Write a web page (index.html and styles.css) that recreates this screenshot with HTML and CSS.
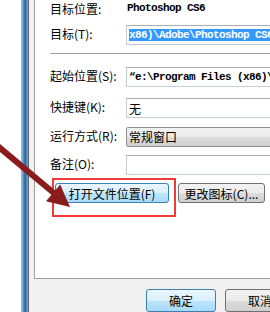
FILE: index.html
```html
<!DOCTYPE html>
<html lang="zh">
<head>
    <meta charset="UTF-8">
    <meta name="viewport" content="width=device-width, initial-scale=1.0">
    <title>Photoshop CS6 属性</title>
    <link rel="stylesheet" href="styles.css">
</head>
<body>

<div class="screen">
    <div class="outside"></div>
    <div class="frame"></div>
    <div class="dialog">
        <div class="panel">
            <div class="row info">
                <span class="label">目标位置:</span>
                <span class="mono">Photoshop CS6</span>
            </div>
            <div class="row target">
                <span class="label">目标(T):</span>
                <div class="field"><span class="mono selected">x86)\Adobe\Photoshop CS6</span></div>
            </div>
            <div class="sep"></div>
            <div class="row start">
                <span class="label">起始位置(S):</span>
                <div class="field"><span class="mono">“e:\Program Files (x86)\Adobe</span></div>
            </div>
            <div class="row hotkey">
                <span class="label">快捷键(K):</span>
                <div class="field">无</div>
            </div>
            <div class="row run">
                <span class="label">运行方式(R):</span>
                <div class="select">常规窗口</div>
            </div>
            <div class="row note">
                <span class="label">备注(O):</span>
                <div class="field"></div>
            </div>
            <div class="actions">
                <button class="btn hot wide">打开文件位置(F)</button>
                <button class="btn">更改图标(C)...</button>
            </div>
        </div>
        <div class="footer">
            <button class="btn hot ok">确定</button>
            <button class="btn ok">取消</button>
        </div>
    </div>

    <div class="mark"></div>
    <svg class="arrow" width="270" height="312" viewBox="0 0 270 312">
        <line x1="-10" y1="139.6" x2="55" y2="194" stroke="#8a1c1c" stroke-width="6"/>
        <polygon points="70,207 46,201.3 60.2,184.5" fill="#8a1c1c"/>
    </svg>
</div>

</body>
</html>
```

FILE: styles.css
```css
body {
    margin: 0;
    font-family: "Noto Sans CJK SC", sans-serif;
    font-size: 12px;
    color: #000;
    background: #fff;
    overflow: hidden;
}
.screen {
    position: relative;
    display: flex;
    width: 270px;
    height: 312px;
    overflow: hidden;
}
.outside {
    width: 21px;
    flex-shrink: 0;
    background: #fff;
}
.frame {
    width: 7px;
    flex-shrink: 0;
    background: linear-gradient(to right, #9ccaec, #5d9ccc 30%, #2f5f8c 60%, #5a92c2 85%, #7fa8c8);
    border-right: 1px solid #5c6670;
}
.dialog {
    width: 300px;
    flex-shrink: 0;
    background: #f0f0f0;
    padding-left: 5px;
    display: flex;
    flex-direction: column;
}
.panel {
    height: 284px;
    background: #fff;
    border-left: 1px solid #a0a0a0;
    border-bottom: 1px solid #a0a0a0;
    padding-left: 15px;
}
.row {
    display: flex;
    align-items: center;
    height: 20px;
}
.label {
    width: 76px;
    flex-shrink: 0;
    padding-bottom: 3px;
    white-space: nowrap;
}
.mono {
    font-family: "Liberation Mono", monospace;
    font-size: 11px;
    letter-spacing: -0.6px;
    font-weight: bold;
    white-space: nowrap;
}
.info {
    height: 16px;
}
.info .label {
    padding-bottom: 0;
}
.info .mono {
    padding-left: 1px;
}
.field {
    width: 170px;
    height: 18px;
    border: 1px solid #c5cbd3;
    border-top-color: #abadb3;
    padding-left: 2px;
    display: flex;
    align-items: center;
    overflow: hidden;
    white-space: nowrap;
}
.selected {
    background: #3399ff;
    color: #fff;
    line-height: 12px;
}
.target {
    margin-top: 9px;
}
.sep {
    height: 1px;
    background: #a0a0a0;
    margin-top: 8px;
}
.start {
    margin-top: 13px;
}
.hotkey {
    margin-top: 11px;
}
.run {
    margin-top: 9px;
}
.note {
    margin-top: 8px;
}
.select {
    width: 170px;
    height: 18px;
    border: 1px solid #8e8f8f;
    border-radius: 2px;
    background: linear-gradient(#f2f2f2, #ebebeb 50%, #dddddd 50%, #cfcfcf);
    padding-left: 2px;
    line-height: 18px;
}
.actions {
    display: flex;
    gap: 9px;
    margin-top: 8px;
    padding-left: 5px;
}
.btn {
    height: 20px;
    padding: 0;
    font-family: "Noto Sans CJK SC", sans-serif;
    font-size: 12px;
    color: #000;
    text-align: center;
    border: 1px solid #707070;
    border-radius: 3px;
    background: linear-gradient(#f2f2f2, #ebebeb 50%, #dddddd 50%, #cfcfcf);
    white-space: nowrap;
}
.btn.hot {
    border-color: #3c7fb1;
    background: linear-gradient(#eaf6fd, #d9f0fc 50%, #bee6fd 50%, #a7d9f5);
}
.wide {
    width: 114px;
}
.actions .btn:last-child {
    width: 87px;
}
.footer {
    display: flex;
    gap: 9px;
    padding-left: 112px;
    padding-top: 10px;
}
.ok {
    width: 70px;
    min-width: 70px;
    height: 23px;
    flex-shrink: 0;
}
.mark {
    position: absolute;
    left: 52px;
    top: 178px;
    width: 120px;
    height: 35px;
    border: 2px solid #f23a3a;
}
.arrow {
    position: absolute;
    left: 0;
    top: 0;
    pointer-events: none;
}
```
